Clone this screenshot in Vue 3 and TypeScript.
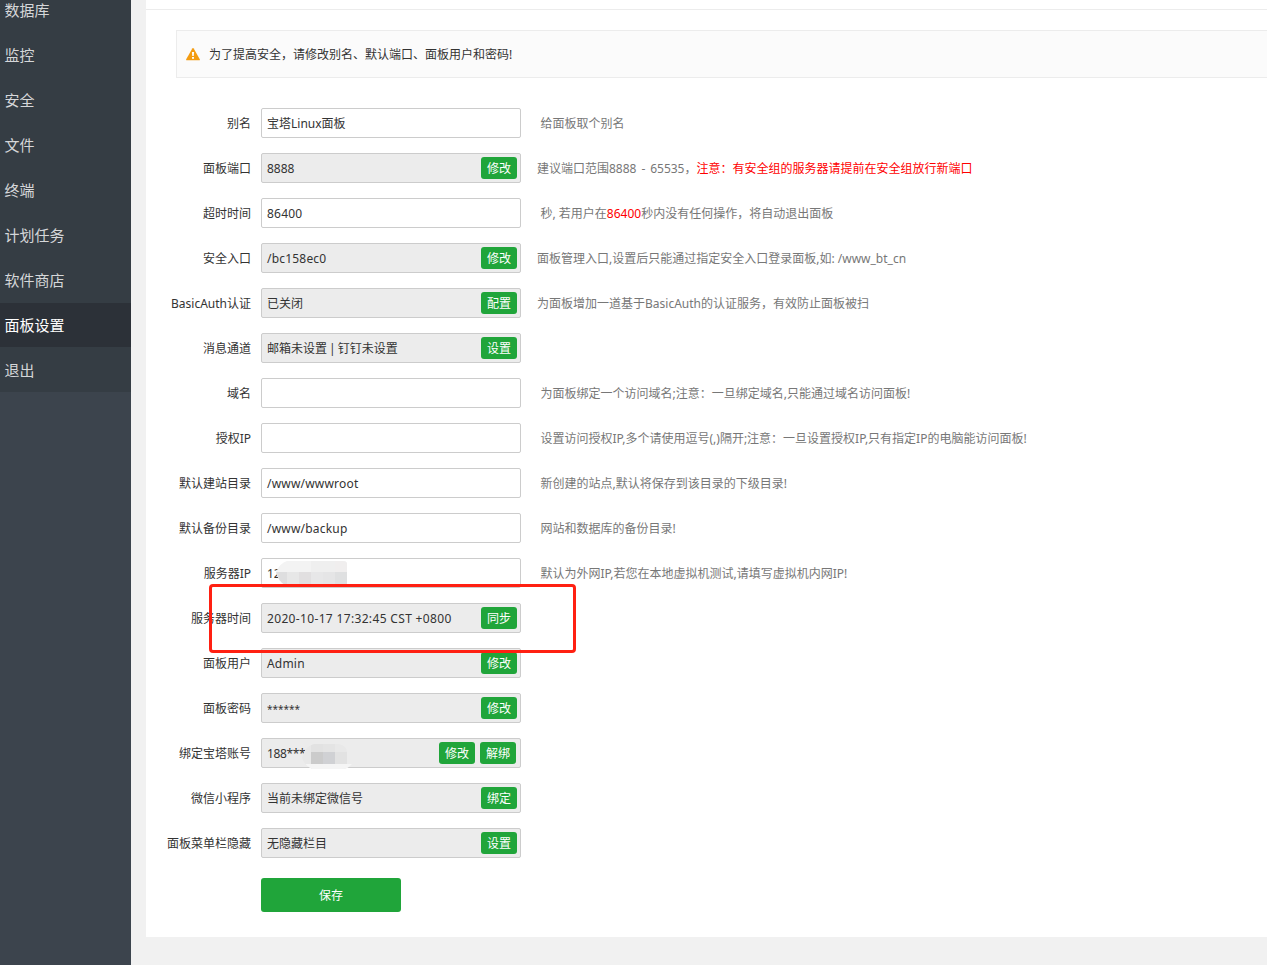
<script setup lang="ts">
interface HintPart {
  text: string
  warn?: boolean
  spaced?: boolean
}

interface SettingRow {
  label: string
  value: string
  tone?: 'path' | 'date' | 'tight' | 'secret' | 'account'
  actions?: string[]
  hint?: HintPart[]
  mask?: 'ip' | 'account'
}

const menu: string[] = ['数据库', '监控', '安全', '文件', '终端', '计划任务', '软件商店', '面板设置', '退出']
const activeMenu = '面板设置'

const rows: SettingRow[] = [
  { label: '别名', value: '宝塔Linux面板', hint: [{ text: '给面板取个别名' }] },
  {
    label: '面板端口',
    value: '8888',
    actions: ['修改'],
    hint: [
      { text: '建议端口范围8888 - 65535，', spaced: true },
      { text: '注意：有安全组的服务器请提前在安全组放行新端口', warn: true },
    ],
  },
  {
    label: '超时时间',
    value: '86400',
    tone: 'path',
    hint: [{ text: '秒, 若用户在' }, { text: '86400', warn: true }, { text: '秒内没有任何操作，将自动退出面板' }],
  },
  {
    label: '安全入口',
    value: '/bc158ec0',
    tone: 'path',
    actions: ['修改'],
    hint: [{ text: '面板管理入口,设置后只能通过指定安全入口登录面板,如: /www_bt_cn' }],
  },
  {
    label: 'BasicAuth认证',
    value: '已关闭',
    actions: ['配置'],
    hint: [{ text: '为面板增加一道基于BasicAuth的认证服务，有效防止面板被扫' }],
  },
  { label: '消息通道', value: '邮箱未设置 | 钉钉未设置', tone: 'tight', actions: ['设置'] },
  { label: '域名', value: '', hint: [{ text: '为面板绑定一个访问域名;注意：一旦绑定域名,只能通过域名访问面板!' }] },
  {
    label: '授权IP',
    value: '',
    hint: [{ text: '设置访问授权IP,多个请使用逗号(,)隔开;注意：一旦设置授权IP,只有指定IP的电脑能访问面板!' }],
  },
  { label: '默认建站目录', value: '/www/wwwroot', tone: 'path', hint: [{ text: '新创建的站点,默认将保存到该目录的下级目录!' }] },
  { label: '默认备份目录', value: '/www/backup', tone: 'path', hint: [{ text: '网站和数据库的备份目录!' }] },
  {
    label: '服务器IP',
    value: '12',
    mask: 'ip',
    hint: [{ text: '默认为外网IP,若您在本地虚拟机测试,请填写虚拟机内网IP!' }],
  },
  { label: '服务器时间', value: '2020-10-17 17:32:45 CST +0800', tone: 'date', actions: ['同步'] },
  { label: '面板用户', value: 'Admin', tone: 'path', actions: ['修改'] },
  { label: '面板密码', value: '******', tone: 'secret', actions: ['修改'] },
  { label: '绑定宝塔账号', value: '188***', tone: 'account', actions: ['修改', '解绑'], mask: 'account' },
  { label: '微信小程序', value: '当前未绑定微信号', actions: ['绑定'] },
  { label: '面板菜单栏隐藏', value: '无隐藏栏目', actions: ['设置'] },
]
</script>

<template>
  <div class="page">
    <nav class="sidebar">
      <div v-for="item in menu" :key="item" class="menu-item" :class="{ active: item === activeMenu }">{{ item }}</div>
    </nav>
    <main class="panel">
      <div class="tabs-edge"></div>
      <div class="notice">
        <svg class="notice-icon" width="14" height="13" viewBox="0 0 14 13">
          <path d="M6.3.6Q7-.4 7.7.6L13.8 11.2Q14.2 12.3 13 12.3H1Q-.2 12.3.2 11.2Z" fill="#f39c12" />
          <path d="M5.9 4h2.2l-.35 4h-1.5z" fill="#fff" />
          <rect x="6" y="8.9" width="2" height="1.9" rx=".3" fill="#fff" />
        </svg>
        <span class="notice-text">为了提高安全，请修改别名、默认端口、面板用户和密码!</span>
      </div>
      <div class="form">
        <div v-for="row in rows" :key="row.label" class="row">
          <span class="label">{{ row.label }}</span>
          <div class="field" :class="{ locked: row.actions, double: row.actions && row.actions.length > 1 }">
            <span class="value" :class="row.tone">{{ row.value }}</span>
            <button v-for="action in row.actions" :key="action" class="action" type="button">{{ action }}</button>
            <svg v-if="row.mask === 'ip'" class="mask mask-ip" width="71" height="24" viewBox="0 0 71 24">
              <clipPath id="ip-clip"><path d="M11 0H67Q71 0 71 3V24H9Q2 20 0 11Q4 2 11 0Z" /></clipPath>
              <g clip-path="url(#ip-clip)">
                <rect width="71" height="24" fill="#f3f3f3" />
                <rect x="35" width="24" height="11" fill="#efefef" />
                <rect x="59" width="12" height="11" fill="#f0eeee" />
                <rect y="11" width="11" height="13" fill="#dededf" />
                <rect x="11" y="11" width="12" height="13" fill="#e7e7e7" />
                <rect x="23" y="11" width="12" height="13" fill="#e1dfe0" />
                <rect x="35" y="11" width="12" height="13" fill="#e7e7e8" />
                <rect x="47" y="11" width="12" height="13" fill="#e5e5e6" />
                <rect x="59" y="11" width="12" height="13" fill="#dfe0e1" />
              </g>
            </svg>
            <svg v-if="row.mask === 'account'" class="mask mask-account" width="50" height="25" viewBox="0 0 50 25">
              <clipPath id="account-clip"><path d="M12 0H37Q45 2 45 8V20H50Q46 25 40 25H10Q3 22 0 14Q3 2 12 0Z" /></clipPath>
              <g clip-path="url(#account-clip)">
                <rect width="50" height="25" fill="#e8e8e8" />
                <rect x="9" width="12" height="8" fill="#e2e2e2" />
                <rect x="21" width="12" height="8" fill="#e4e4e4" />
                <rect x="9" y="8" width="12" height="12" fill="#cbcbcb" />
                <rect x="21" y="8" width="12" height="12" fill="#d0d1d4" />
                <rect x="33" y="8" width="12" height="12" fill="#e2e2e2" />
                <rect y="20" width="50" height="5" fill="#f5f5f5" />
              </g>
            </svg>
          </div>
          <span v-if="row.hint" class="hint" :class="{ near: row.actions }"><span
            v-for="(part, i) in row.hint" :key="i" :class="{ warn: part.warn, spaced: part.spaced }">{{ part.text }}</span></span>
        </div>
        <button class="save" type="button">保存</button>
      </div>
    </main>
    <div class="highlight"></div>
  </div>
</template>

<style>
body {
  margin: 0;
  overflow: hidden;
}
</style>

<style scoped>
.page {
  position: relative;
  display: flex;
  width: 1267px;
  height: 965px;
  overflow: hidden;
  background: #f1f1f1;
  color: #333;
  font: 12px/18px "Noto Sans", "Noto Sans CJK SC", sans-serif;
}
.sidebar {
  flex: none;
  width: 131px;
  height: 965px;
  overflow: hidden;
  background: #3c444d;
}
.menu-item {
  box-sizing: border-box;
  height: 45px;
  padding-left: 4.5px;
  border-bottom: 1px solid #353d44;
  background: #353d44;
  color: #d5d7d9;
  font-size: 15px;
  line-height: 44px;
}
.menu-item:first-child {
  margin-top: -12px;
}
.menu-item:last-child {
  height: 44px;
}
.menu-item.active {
  background: #2c3138;
  color: #fff;
}
.panel {
  box-sizing: border-box;
  flex: 1;
  height: 937px;
  margin-left: 15px;
  background: #fff;
}
.tabs-edge {
  height: 9px;
  border-bottom: 1px solid #ececec;
}
.notice {
  display: flex;
  align-items: center;
  box-sizing: border-box;
  height: 48px;
  margin: 20px 0 0 30px;
  padding-left: 9px;
  border: 1px solid #ececec;
  border-right: 0;
  background: #fbfbfb;
}
.notice-icon {
  margin-right: 9px;
}
.notice-text {
  padding-top: 2px;
}
.form {
  padding-top: 30px;
}
.row {
  display: flex;
  align-items: center;
  height: 30px;
  margin-bottom: 15px;
  white-space: nowrap;
}
.label {
  width: 105px;
  margin-right: 10px;
  padding-top: 2px;
  text-align: right;
}
.field {
  position: relative;
  display: flex;
  align-items: center;
  flex: none;
  gap: 5px;
  box-sizing: border-box;
  width: 260px;
  height: 30px;
  padding: 0 3px 0 5px;
  border: 1px solid #ccc;
  border-radius: 2px;
}
.field.locked {
  background: #ececec;
}
.field.double {
  padding-right: 4px;
}
.value {
  flex: 1;
  padding-top: 2px;
}
.value.path {
  letter-spacing: 0.2px;
}
.value.date {
  letter-spacing: 0.34px;
}
.value.tight {
  word-spacing: -1.1px;
}
.value.secret {
  font-size: 10px;
  letter-spacing: 0;
}
.value.account {
  letter-spacing: -0.35px;
}
.action {
  width: 36px;
  height: 22px;
  padding: 1px 0 0;
  border: 0;
  border-radius: 3px;
  background: #20a53a;
  color: #fff;
  font: inherit;
  line-height: 22px;
}
.mask {
  position: absolute;
}
.mask-ip {
  top: 2px;
  left: 14px;
}
.mask-account {
  top: 5px;
  left: 40px;
}
.hint {
  margin-left: 19.5px;
  padding-top: 2px;
  color: #777;
}
.hint.near {
  margin-left: 16px;
}
.warn {
  color: #f00;
}
.spaced {
  word-spacing: 1.8px;
}
.save {
  display: block;
  width: 140px;
  height: 34px;
  margin: 20px 0 0 115px;
  padding: 2px 0 0;
  border: 0;
  border-radius: 3px;
  background: #20a53a;
  color: #fff;
  font: inherit;
}
.highlight {
  position: absolute;
  top: 584px;
  left: 209px;
  box-sizing: border-box;
  width: 367px;
  height: 69px;
  border: 3px solid #ff2012;
  border-radius: 4px;
}
</style>
